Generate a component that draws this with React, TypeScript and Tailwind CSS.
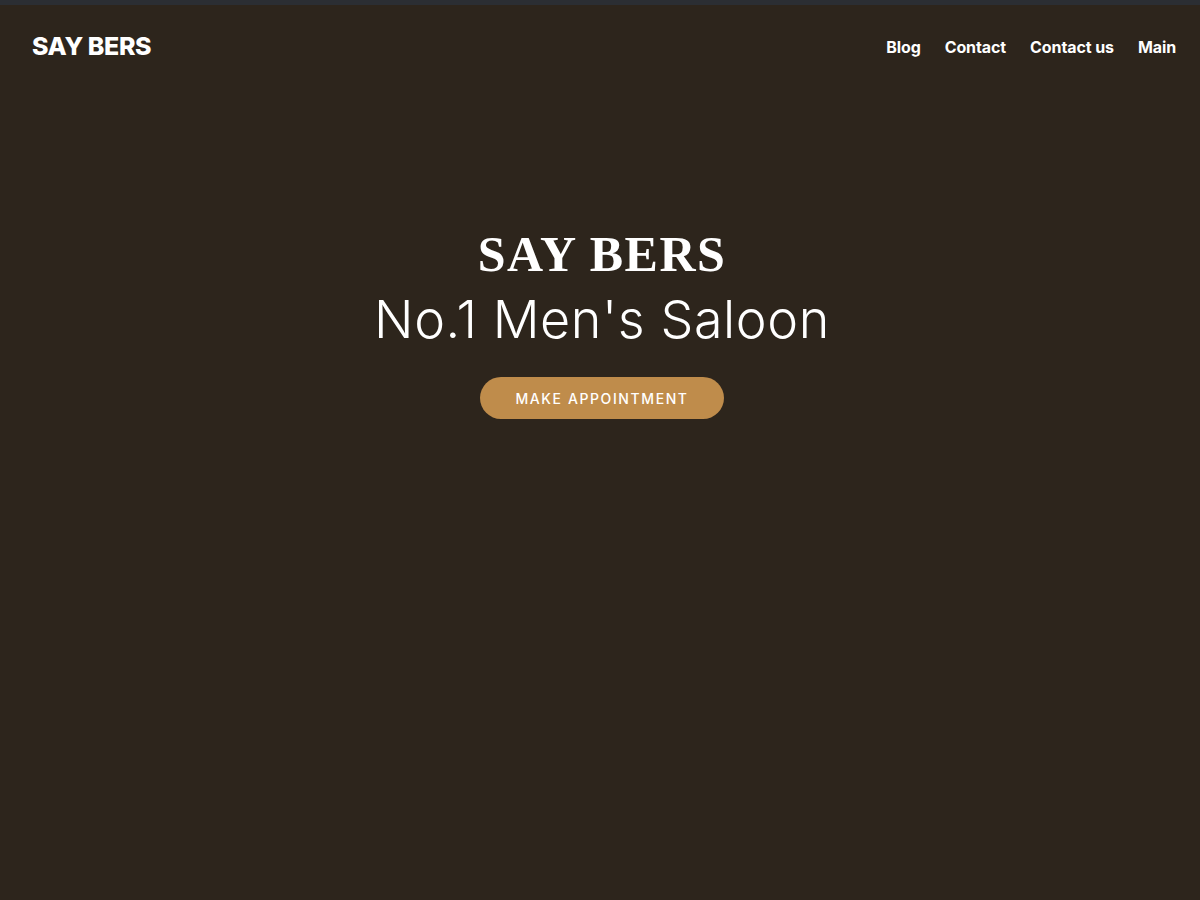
export default function App() {
  const links = ["Blog", "Contact", "Contact us", "Main"];

  return (
    <div className="min-h-screen w-full bg-[#2d251c] text-white font-['Inter','Open_Sans',sans-serif]">
      {/* top strip */}
      <div className="h-[5px] bg-[#2b2e33]" />

      {/* header */}
      <header className="flex items-center justify-between pl-8 pr-6 h-[88px] -mt-[5px] pt-[5px]">
        <div className="text-[25px] font-extrabold tracking-[-0.4px]">SAY BERS</div>
        <nav className="flex items-center gap-6">
          {links.map((l) => (
            <a key={l} href="#" className="text-[16px] font-bold tracking-[-0.1px]">
              {l}
            </a>
          ))}
        </nav>
      </header>

      {/* hero */}
      <section className="flex flex-col items-center pt-[138px] pl-1">
        <h1 className="text-[50px] leading-[56px] font-bold tracking-[1.5px] font-['Liberation_Serif','DejaVu_Serif',serif]">
          SAY BERS
        </h1>
        <h2 className="text-[52px] leading-[76px] font-light tracking-[0.6px]">
          No.1 Men's Saloon
        </h2>
        <button className="mt-[19px] w-[244px] h-[42px] rounded-full bg-[#bf8c4b] text-[14px] font-medium tracking-[1.6px]">
          MAKE APPOINTMENT
        </button>
      </section>
    </div>
  );
}
